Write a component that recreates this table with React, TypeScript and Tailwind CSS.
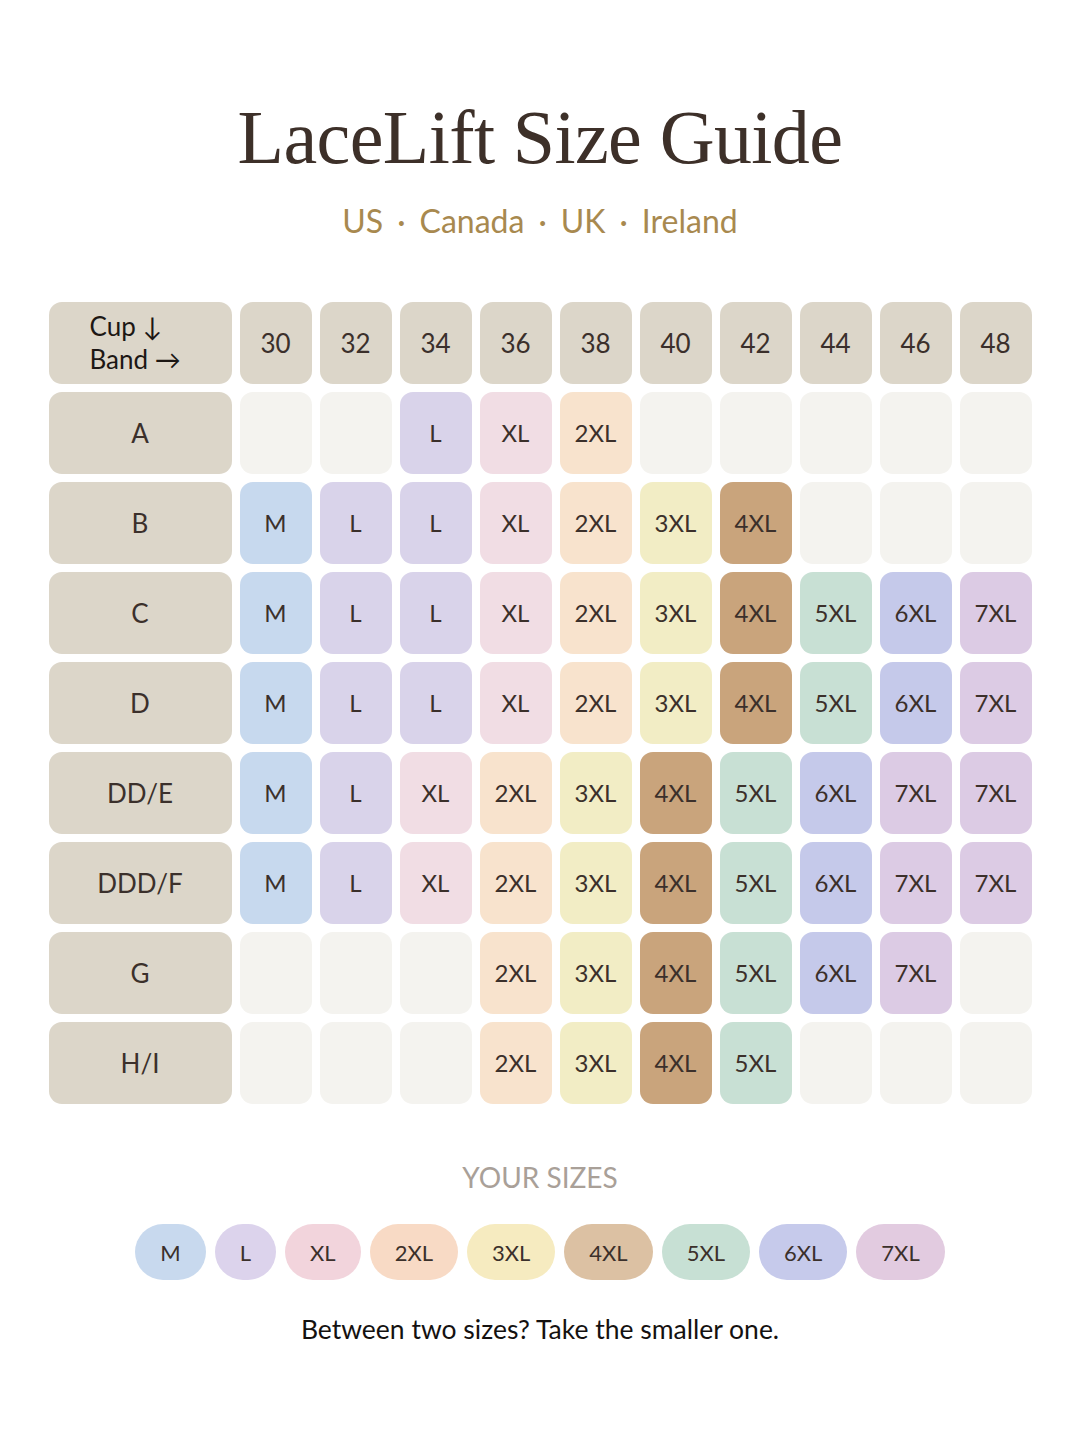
const SANS = "font-['Lato','Open_Sans',sans-serif]";

const FILL: Record<string, string> = {
  M: "bg-[#c7d9ee]",
  L: "bg-[#d9d3ea]",
  XL: "bg-[#f1dde4]",
  "2XL": "bg-[#f8e3cd]",
  "3XL": "bg-[#f2edc5]",
  "4XL": "bg-[#c9a47c]",
  "5XL": "bg-[#c8e0d4]",
  "6XL": "bg-[#c5c9ea]",
  "7XL": "bg-[#dccbe4]",
};

const PILL: Record<string, string> = {
  M: "bg-[#c8d9ee]",
  L: "bg-[#dcd3ec]",
  XL: "bg-[#f2d4dc]",
  "2XL": "bg-[#f8dac5]",
  "3XL": "bg-[#f6ebc0]",
  "4XL": "bg-[#dcc1a3]",
  "5XL": "bg-[#c7e0d4]",
  "6XL": "bg-[#c6caeb]",
  "7XL": "bg-[#e2cbe0]",
};

const bands = ["30", "32", "34", "36", "38", "40", "42", "44", "46", "48"];

const rows: { cup: string; sizes: string[] }[] = [
  { cup: "A", sizes: ["", "", "L", "XL", "2XL", "", "", "", "", ""] },
  { cup: "B", sizes: ["M", "L", "L", "XL", "2XL", "3XL", "4XL", "", "", ""] },
  { cup: "C", sizes: ["M", "L", "L", "XL", "2XL", "3XL", "4XL", "5XL", "6XL", "7XL"] },
  { cup: "D", sizes: ["M", "L", "L", "XL", "2XL", "3XL", "4XL", "5XL", "6XL", "7XL"] },
  { cup: "DD/E", sizes: ["M", "L", "XL", "2XL", "3XL", "4XL", "5XL", "6XL", "7XL", "7XL"] },
  { cup: "DDD/F", sizes: ["M", "L", "XL", "2XL", "3XL", "4XL", "5XL", "6XL", "7XL", "7XL"] },
  { cup: "G", sizes: ["", "", "", "2XL", "3XL", "4XL", "5XL", "6XL", "7XL", ""] },
  { cup: "H/I", sizes: ["", "", "", "2XL", "3XL", "4XL", "5XL", "", "", ""] },
];

const legend = ["M", "L", "XL", "2XL", "3XL", "4XL", "5XL", "6XL", "7XL"];

const regions = ["US", "Canada", "UK", "Ireland"];

function Cell({ size }: { size: string }) {
  const fill = size ? FILL[size] : "bg-[#f4f3ef]";
  return (
    <div className={`flex h-[82px] items-center justify-center rounded-[13px] text-[24px] text-[#3b302b] ${fill}`}>
      {size}
    </div>
  );
}

export default function App() {
  return (
    <main className={`min-h-[1440px] bg-white ${SANS}`}>
      <div className="flex flex-col items-center pt-[99px]">
        <h1 className="font-['Liberation_Serif',serif] text-[76px] leading-none tracking-[-0.6px] text-[#3d3029]">
          LaceLift Size Guide
        </h1>
        <p className="mt-[30px] flex text-[32px] leading-none text-[#a8894f]">
          {regions.map((r, i) => (
            <span key={r}>
              {i > 0 && <span className="mx-[14px]">·</span>}
              {r}
            </span>
          ))}
        </p>

        <div className="mt-[65px] grid grid-cols-[183px_repeat(10,72px)] gap-2">
          <div className="flex h-[82px] flex-col justify-center rounded-[13px] bg-[#dcd6c9] pl-[41px] text-[26px] leading-[33px] text-[#1c1714]">
            <span>Cup ↓</span>
            <span>Band →</span>
          </div>
          {bands.map((b) => (
            <div
              key={b}
              className="flex h-[82px] items-center justify-center rounded-[13px] bg-[#dcd6c9] text-[26px] text-[#3b302b]"
            >
              {b}
            </div>
          ))}

          {rows.map((r) => (
            <div key={r.cup} className="contents">
              <div className="flex h-[82px] items-center justify-center rounded-[13px] bg-[#dcd6c9] text-[26px] text-[#3b302b]">
                {r.cup}
              </div>
              {r.sizes.map((s, i) => (
                <Cell key={i} size={s} />
              ))}
            </div>
          ))}
        </div>

        <p className="mt-[59px] text-[28px] leading-none text-[#a9a098]">YOUR SIZES</p>

        <div className="mt-[33px] flex gap-[9px]">
          {legend.map((s) => (
            <div
              key={s}
              className={`flex h-14 items-center rounded-full px-[25px] text-[22px] text-[#3b302b] ${PILL[s]}`}
            >
              {s}
            </div>
          ))}
        </div>

        <p className="mt-[36px] text-[26.5px] leading-none text-[#141110]">
          Between two sizes? Take the smaller one.
        </p>
      </div>
    </main>
  );
}
